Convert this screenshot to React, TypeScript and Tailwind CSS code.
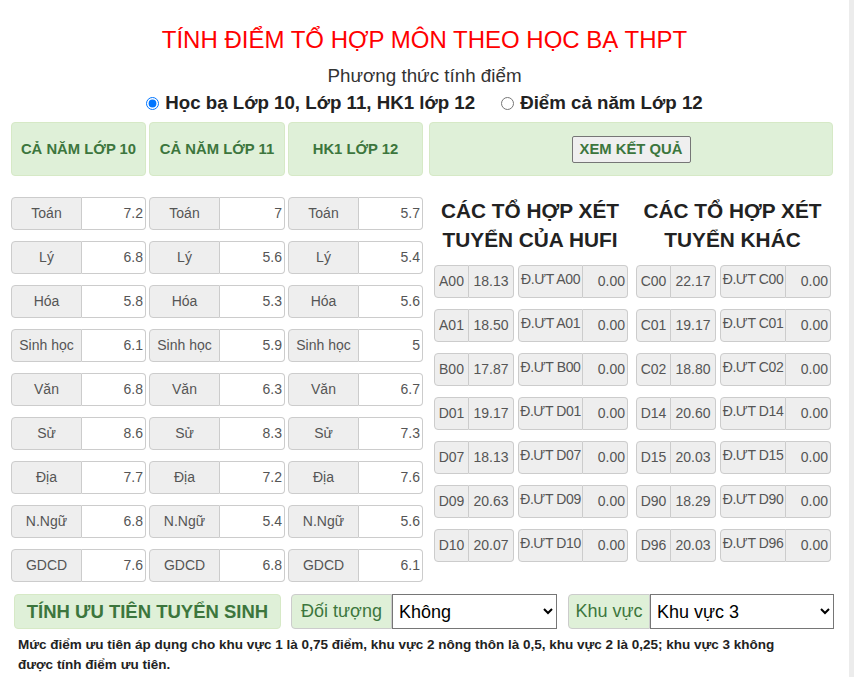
import React from "react";

const font = { fontFamily: '"Liberation Sans", Arial, sans-serif' };

const scores: [string, string, string, string][] = [
  ["Toán", "7.2", "7", "5.7"],
  ["Lý", "6.8", "5.6", "5.4"],
  ["Hóa", "5.8", "5.3", "5.6"],
  ["Sinh học", "6.1", "5.9", "5"],
  ["Văn", "6.8", "6.3", "6.7"],
  ["Sử", "8.6", "8.3", "7.3"],
  ["Địa", "7.7", "7.2", "7.6"],
  ["N.Ngữ", "6.8", "5.4", "5.6"],
  ["GDCD", "7.6", "6.8", "6.1"],
];

const hufi = [
  ["A00", "18.13"],
  ["A01", "18.50"],
  ["B00", "17.87"],
  ["D01", "19.17"],
  ["D07", "18.13"],
  ["D09", "20.63"],
  ["D10", "20.07"],
];

const other = [
  ["C00", "22.17"],
  ["C01", "19.17"],
  ["C02", "18.80"],
  ["D14", "20.60"],
  ["D15", "20.03"],
  ["D90", "18.29"],
  ["D96", "20.03"],
];

function ScoreCell({ label, value, w }: { label: string; value: string; w: string }) {
  return (
    <div className={`flex h-[33px] ${w} text-[14px] text-[#555]`}>
      <div className="w-[71px] shrink-0 flex items-center justify-center bg-[#eee] border border-[#ccc] rounded-l-[4px]">
        {label}
      </div>
      <div className="flex-1 flex items-center justify-end pr-[2px] bg-white border border-l-0 border-[#ccc] rounded-r-[4px]">
        {value}
      </div>
    </div>
  );
}

function ComboRow({ code, total, wide }: { code: string; total: string; wide?: boolean }) {
  const cell = "h-[33px] flex items-center bg-[#eee] border border-[#ccc] whitespace-nowrap";
  return (
    <div className="flex gap-[4px] text-[14px] text-[#555]">
      <div className="flex">
        <div className={`${cell} w-[35px] justify-center rounded-l-[4px]`}>{code}</div>
        <div className={`${cell} w-[45px] justify-center border-l-0 rounded-r-[4px]`}>{total}</div>
      </div>
      <div className="flex">
        <div className={`${cell} ${wide ? "w-[66px]" : "w-[65px]"} justify-center rounded-l-[4px] pb-[4px] tracking-[-0.4px]`}>
          {`Đ.ƯT ${code}`}
        </div>
        <div className={`${cell} w-[45px] justify-end pr-[2px] border-l-0 rounded-r-[4px]`}>0.00</div>
      </div>
    </div>
  );
}

export default function App() {
  return (
    <div className="flex bg-white" style={font}>
      <div className="w-[849px] shrink-0">
        <h1 className="pt-[26px] h-[54px] text-center text-[24px] leading-[28px] text-[#ff0000]">
          TÍNH ĐIỂM TỔ HỢP MÔN THEO HỌC BẠ THPT
        </h1>
        <p className="mt-[11px] text-center text-[18.8px] leading-[22px] text-[#333]">Phương thức tính điểm</p>
        <div className="mt-[4px] flex justify-center items-center gap-[26px] text-[18.7px] leading-[24px] font-bold text-[#222]">
          <label className="flex items-center gap-[6px]">
            <input type="radio" name="pt" defaultChecked className="w-[13px] h-[13px] m-0" />
            Học bạ Lớp 10, Lớp 11, HK1 lớp 12
          </label>
          <label className="flex items-center gap-[6px]">
            <input type="radio" name="pt" className="w-[13px] h-[13px] m-0" />
            Điểm cả năm Lớp 12
          </label>
        </div>

        <div className="mt-[7px] flex pl-[11px] text-[14.8px] font-bold text-[#3c763d]">
          <div className="w-[135px] h-[54px] flex items-center justify-center bg-[#dff0d8] border border-[#d6e9c6] rounded-[4px]">
            CẢ NĂM LỚP 10
          </div>
          <div className="ml-[3px] w-[136px] h-[54px] flex items-center justify-center bg-[#dff0d8] border border-[#d6e9c6] rounded-[4px]">
            CẢ NĂM LỚP 11
          </div>
          <div className="ml-[3px] w-[135px] h-[54px] flex items-center justify-center bg-[#dff0d8] border border-[#d6e9c6] rounded-[4px]">
            HK1 LỚP 12
          </div>
          <div className="ml-[6px] w-[404px] h-[54px] flex items-center justify-center bg-[#dff0d8] border border-[#d6e9c6] rounded-[4px]">
            <button className="w-[119px] h-[27px] bg-[#efefef] border border-[#767676] rounded-[2px] text-[#3c763d] font-bold text-[14.8px]">
              XEM KẾT QUẢ
            </button>
          </div>
        </div>

        <div className="mt-[21px] flex pl-[11px]">
          <div className="flex flex-col gap-[11px]">
            {scores.map(([s, a, b, c]) => (
              <div key={s} className="flex gap-[3px]">
                <ScoreCell label={s} value={a} w="w-[135px]" />
                <ScoreCell label={s} value={b} w="w-[136px]" />
                <ScoreCell label={s} value={c} w="w-[135px]" />
              </div>
            ))}
          </div>

          <div className="ml-[10px] w-[194px]">
            <h2 className="-mt-[1px] text-center text-[20.8px] leading-[29px] font-bold text-[#222]">
              CÁC TỔ HỢP XÉT
              <br />
              TUYỂN CỦA HUFI
            </h2>
            <div className="mt-[11px] ml-[1px] flex flex-col gap-[11px]">
              {hufi.map(([c, t]) => (
                <ComboRow key={c} code={c} total={t} />
              ))}
            </div>
          </div>

          <div className="ml-[8px] w-[195px]">
            <h2 className="-mt-[1px] text-center text-[20.8px] leading-[29px] font-bold text-[#222]">
              CÁC TỔ HỢP XÉT
              <br />
              TUYỂN KHÁC
            </h2>
            <div className="mt-[11px] ml-[1px] flex flex-col gap-[11px]">
              {other.map(([c, t]) => (
                <ComboRow key={c} code={c} total={t} wide />
              ))}
            </div>
          </div>
        </div>

        <div className="mt-[12px] flex items-center pl-[14px]">
          <div className="w-[267px] h-[35px] flex items-center justify-center bg-[#dff0d8] border border-[#d6e9c6] rounded-[4px] text-[18.5px] font-bold text-[#3c763d]">
            TÍNH ƯU TIÊN TUYỂN SINH
          </div>
          <div className="ml-[10px] flex h-[35px]">
            <div className="w-[101px] flex items-center justify-center bg-[#dff0d8] border border-[#ccc] rounded-l-[4px] text-[18px] text-[#3c763d]">
              Đối tượng
            </div>
            <select className="w-[165px] h-[35px] border border-[#767676] bg-white text-[18px] text-black pl-[2px]" defaultValue="0">
              <option value="0">Không</option>
              <option value="1">Đối tượng 01</option>
            </select>
          </div>
          <div className="ml-[11px] flex h-[35px]">
            <div className="w-[82px] flex items-center justify-center bg-[#dff0d8] border border-[#ccc] rounded-l-[4px] text-[18px] text-[#3c763d]">
              Khu vực
            </div>
            <select className="w-[184px] h-[35px] border border-[#767676] bg-white text-[18px] text-black pl-[2px]" defaultValue="3">
              <option value="1">Khu vực 1</option>
              <option value="3">Khu vực 3</option>
            </select>
          </div>
        </div>

        <p className="mt-[6px] pl-[18px] pr-[72px] text-[13.5px] leading-[20px] font-bold text-[#222]">
          Mức điểm ưu tiên áp dụng cho khu vực 1 là 0,75 điểm, khu vực 2 nông thôn là 0,5, khu vực 2 là 0,25; khu vực 3 không
          được tính điểm ưu tiên.
        </p>
        <p className="mt-[6px] pl-[18px] pr-[72px] text-[13.5px] leading-[20px] font-bold text-[#222]">
          Mức điểm ưu tiên áp dụng cho nhóm đối tượng 1 là 2 điểm, nhóm đối tượng 2 là 1 điểm.
        </p>
        <div className="h-[40px]" />
      </div>
      <div className="w-[5px] shrink-0 bg-[#ececec]" />
    </div>
  );
}
